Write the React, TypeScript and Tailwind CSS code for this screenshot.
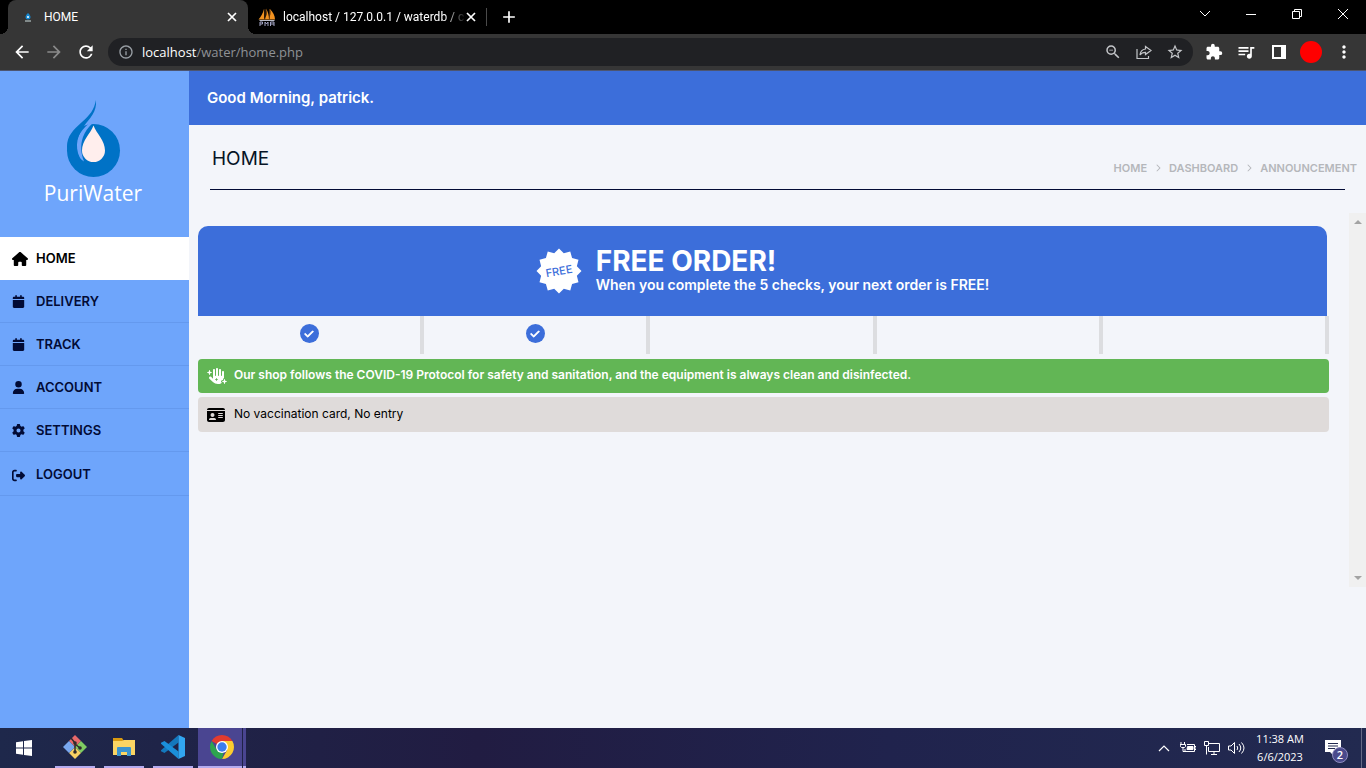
import type { ReactNode } from 'react';
import {
  FaCalendar,
  FaCheck,
  FaChevronRight,
  FaGear,
  FaHandSparkles,
  FaHouse,
  FaIdCard,
  FaRightFromBracket,
  FaUser,
} from 'react-icons/fa6';
import {
  MdAdd,
  MdArrowBack,
  MdArrowForward,
  MdExtension,
  MdInfoOutline,
  MdMoreVert,
  MdOutlineZoomOut,
  MdQueueMusic,
  MdRefresh,
  MdStarBorder,
} from 'react-icons/md';

const navItems = [
  { label: 'HOME', icon: FaHouse, active: true },
  { label: 'DELIVERY', icon: FaCalendar },
  { label: 'TRACK', icon: FaCalendar },
  { label: 'ACCOUNT', icon: FaUser },
  { label: 'SETTINGS', icon: FaGear },
  { label: 'LOGOUT', icon: FaRightFromBracket },
];

const checks = [true, true, false, false, false];

const sealPoints = Array.from({ length: 24 }, (_, i) => {
  const r = i % 2 === 0 ? 22.5 : 18.5;
  const a = (i * Math.PI) / 12;
  return `${(23 + r * Math.sin(a)).toFixed(2)},${(23 - r * Math.cos(a)).toFixed(2)}`;
}).join(' ');

function CloseGlyph() {
  return (
    <svg viewBox="0 0 10 10" className="size-[10px]" stroke="currentColor" strokeWidth="1.7">
      <path d="M1 1l8 8M9 1l-8 8" />
    </svg>
  );
}

function PmaIcon() {
  return (
    <svg viewBox="0 0 18 18" className="size-[18px] shrink-0">
      <path d="M6 1C5 5 3 9 .5 11.500H6zM8 .5c1 4 1 8-2 11h5c0-4-1-8-3-11zM12 1c3 3 5 7 5 10.500h-6c1-3 2-7 1-10.500z" fill="#f29220" />
      <path d="M7 1v10M11.500 1v10" stroke="#6b3a0c" strokeWidth="0.8" />
      <path d="M1 12h16l-1 1H2z" fill="#b9bcc8" />
      <path d="M2 18v-4h2.500v2H2M7 18v-4l1.500 2 1.500-2v4M12.500 18v-4H16v4M12.500 16H16" stroke="#a3a5c4" fill="none" />
    </svg>
  );
}

function BrowserTabs() {
  return (
    <div className="flex h-[34px] bg-black pl-2 text-white">
      <div className="relative flex w-60 items-center rounded-t-lg bg-[#363636] pr-[11px] pl-4">
        <span className="absolute bottom-0 -left-2 size-2 bg-[radial-gradient(circle_at_0_0,#000_8px,#363636_8px)]" />
        <span className="absolute -right-2 bottom-0 size-2 bg-[radial-gradient(circle_at_100%_0,#000_8px,#363636_8px)]" />
        <svg viewBox="0 0 8 10" className="h-[10px] w-2">
          <path d="M4 1c2 2 2.500 3 2.500 4a2.500 2.500 0 0 1-5 0C1.500 4 2 3 4 1z" fill="#1687cf" />
          <circle cx="4" cy="5" r="1" fill="#fff" />
          <path d="M1 9h6" stroke="#cdd" strokeWidth="1" />
        </svg>
        <span className="ml-3 flex-1 text-xs font-['Roboto',sans-serif]">HOME</span>
        <button aria-label="Close tab"><CloseGlyph /></button>
      </div>
      <div className="my-2 flex w-[239px] items-center border-r border-[#4a4a4a] pr-[10px] pl-[10px]">
        <PmaIcon />
        <span className="ml-[7px] flex-1 text-xs whitespace-nowrap font-['Roboto',sans-serif] [mask-image:linear-gradient(90deg,#000_88%,transparent)]">
          localhost / 127.0.0.1 / waterdb / c
        </span>
        <button aria-label="Close tab"><CloseGlyph /></button>
      </div>
      <button aria-label="New tab" className="ml-3"><MdAdd className="size-5" /></button>
      <div className="ml-auto flex items-center pb-[6px]">
        <button aria-label="Search tabs" className="flex w-[46px] justify-center">
          <svg viewBox="0 0 12 8" className="h-2 w-3" fill="none" stroke="currentColor"><path d="M1 1l5 5 5-5" /></svg>
        </button>
        <button aria-label="Minimize" className="flex w-[46px] justify-center">
          <svg viewBox="0 0 10 10" className="size-[10px]" stroke="currentColor"><path d="M0 5.500h10" /></svg>
        </button>
        <button aria-label="Restore" className="flex w-[46px] justify-center">
          <svg viewBox="0 0 10 10" className="size-[10px]" fill="none" stroke="currentColor"><path d="M.5 2.500h7v7h-7zM2.500 2V.5h7v7H8" /></svg>
        </button>
        <button aria-label="Close" className="flex w-[46px] justify-center">
          <svg viewBox="0 0 10 10" className="size-[10px]" stroke="currentColor"><path d="M0 0l10 10M10 0L0 10" /></svg>
        </button>
      </div>
    </div>
  );
}

function BrowserToolbar() {
  return (
    <div className="flex h-[37px] items-center border-b border-[#4d5570] bg-[#363636] pr-3 pl-3 text-white">
      <button aria-label="Back"><MdArrowBack className="size-5" /></button>
      <button aria-label="Forward" className="ml-3 text-[#8a8a8a]"><MdArrowForward className="size-5" /></button>
      <button aria-label="Reload" className="ml-3"><MdRefresh className="size-5" /></button>
      <div className="ml-3 flex h-7 flex-1 items-center rounded-full bg-[#202124] pr-[9px] pl-[10px] text-[#c4c6c9]">
        <MdInfoOutline className="size-4 text-[#9aa0a6]" />
        <div className="ml-2 flex-1 pt-px text-[13px] text-[#8f9296]"><span className="text-white">localhost</span>/water/home.php</div>
        <div className="flex items-center gap-[14px]">
          <button aria-label="Zoom"><MdOutlineZoomOut className="size-[18px]" /></button>
          <button aria-label="Share">
            <svg viewBox="0 0 16 16" className="size-4" fill="none" stroke="currentColor" strokeWidth="1.200">
              <path d="M1 5v9.500h11.500V12" />
              <path d="M9.500 2.500L15 6.500l-5.500 4V8.300C7 8.300 5.300 9 4 11c.3-3.500 2.300-5.600 5.500-6z" />
            </svg>
          </button>
          <button aria-label="Bookmark"><MdStarBorder className="size-[18px]" /></button>
        </div>
      </div>
      <div className="ml-3 flex items-center">
        <button aria-label="Extensions"><MdExtension className="size-[18px]" /></button>
        <button aria-label="Media" className="ml-[13px]"><MdQueueMusic className="size-5" /></button>
        <button aria-label="Side panel" className="ml-4">
          <svg viewBox="0 0 14 14" className="size-[14px]"><path d="M0 0h14v14H0zM2 2v10h7V2z" fill="currentColor" fillRule="evenodd" /></svg>
        </button>
        <button aria-label="Profile" className="ml-[14px] size-[22px] rounded-full bg-[#ff0000]" />
        <button aria-label="Menu" className="ml-3"><MdMoreVert className="size-5" /></button>
      </div>
    </div>
  );
}

function Logo() {
  return (
    <div className="flex h-[166px] flex-col items-center pt-7 pr-[3px]">
      <svg viewBox="0 0 60 80" className="h-20 w-[60px]">
        <circle cx="30.500" cy="51.500" r="26.500" fill="#0072c6" />
        <path d="M25.500 24.800C16 33 11 43 14 54c2 4 4 7 7 8.500-3-8-4-16-1-24.500 2-5 5-9.500 9-13.200z" fill="#6ea5fb" />
        <path d="M33 1c1 12-6 18-12 26-9 13-9 24-2 36C9 60 4 55 4 48c0-11 6-17 15-25C27 16 31 11 33 1z" fill="#0072c6" />
        <path d="M30.500 26.500c3 8 11.500 15 11.500 25a11.500 11.500 0 0 1-23 0c0-10 8.500-17 11.500-25z" fill="#ffeeed" />
      </svg>
      <span className="-mt-0.5 text-[21px] leading-8 font-medium text-white font-['Open_Sans',sans-serif]">PuriWater</span>
    </div>
  );
}

function Sidebar() {
  return (
    <aside className="w-[189px] shrink-0 bg-[#6ea5fb] font-['Inter',sans-serif] text-[#020b35]">
      <Logo />
      <nav>
        {navItems.map(({ label, icon: Icon, active }) => (
          <a
            key={label}
            href="#"
            className={
              active
                ? 'flex h-[43px] items-center bg-white px-3 text-[13px] font-semibold text-black'
                : 'flex h-[43px] items-center border-b border-[#6499ee] px-3 pt-px text-[13px] font-semibold last:h-11 last:pt-[3px]'
            }
          >
            <span className="w-6"><Icon className={active ? 'size-4' : 'size-[13px]'} /></span>
            {label}
          </a>
        ))}
      </nav>
    </aside>
  );
}

function Notice({ icon, className, children }: { icon: ReactNode; className: string; children: ReactNode }) {
  return (
    <p className={`flex items-center rounded px-[9px] ${className}`}>
      <span className="w-[27px]">{icon}</span>
      <span className="pb-0.5">{children}</span>
    </p>
  );
}

function Content() {
  return (
    <main className="flex min-w-0 flex-1 flex-col bg-[#f3f5fa] font-['Inter',sans-serif] text-black">
      <header className="flex h-[54px] items-center bg-[#3c6eda] px-[18px] text-[15px] font-semibold text-white">
        Good Morning, patrick.
      </header>
      <div className="mx-[21px] flex h-[65px] items-center justify-between border-b border-[#020b35]">
        <h1 className="pt-1 pl-0.5 text-[19px] leading-6 text-[#061426]">HOME</h1>
        <nav aria-label="Breadcrumb" className="-mr-3 flex items-center gap-[7px] pt-[22px] text-[11px] font-semibold text-[#b5b7bb]">
          <a href="#">HOME</a>
          <FaChevronRight className="size-2" />
          <a href="#">DASHBOARD</a>
          <FaChevronRight className="size-2" />
          <a href="#">ANNOUNCEMENT</a>
        </nav>
      </div>
      <div className="mt-[23px] flex min-h-[374px]">
        <div className="min-w-0 flex-1 pt-[13px] pr-5 pl-[9px]">
          <section className="mr-0.5 flex h-[90px] items-center justify-center gap-[14px] rounded-t-[10px] bg-[#3c6eda] text-white">
            <svg viewBox="0 0 46 46" className="size-[46px]">
              <polygon points={sealPoints} fill="#fff" />
              <text x="23" y="27" textAnchor="middle" fontSize="11" fontWeight="500" fill="#3c6eda" transform="rotate(-10 23 23)">FREE</text>
            </svg>
            <div>
              <h2 className="text-[28px] leading-7 font-bold">FREE ORDER!</h2>
              <p className="text-sm leading-5 font-semibold">When you complete the 5 checks, your next order is FREE!</p>
            </div>
          </section>
          <ol className="grid h-[38px] grid-cols-5">
            {checks.map((done, i) => (
              <li key={i} className="flex justify-center border-r-4 border-[#dcdde0] pt-2">
                {done && (
                  <span className="flex size-[19px] items-center justify-center rounded-full bg-[#3c6eda] text-white">
                    <FaCheck className="size-[10px]" stroke="currentColor" strokeWidth="40" />
                  </span>
                )}
              </li>
            ))}
          </ol>
          <Notice icon={<FaHandSparkles className="size-5" />} className="mt-[5px] h-[34px] bg-[#62b655] text-xs font-semibold text-white">
            Our shop follows the COVID-19 Protocol for safety and sanitation, and the equipment is always clean and disinfected.
          </Notice>
          <Notice icon={<FaIdCard className="size-[18px]" />} className="mt-1 h-[35px] bg-[#dfdbda] text-xs text-black">
            No vaccination card, No entry
          </Notice>
        </div>
        <div className="flex w-[17px] flex-col items-center justify-between bg-[#f0f0f0] py-[7px] text-[#a3a3a3]">
          <svg viewBox="0 0 8 4" className="h-1 w-2"><path d="M0 4l4-4 4 4z" fill="currentColor" /></svg>
          <svg viewBox="0 0 8 4" className="h-1 w-2"><path d="M0 0l4 4 4-4z" fill="currentColor" /></svg>
        </div>
      </div>
    </main>
  );
}

function GitIcon() {
  return (
    <svg viewBox="0 0 24 24" className="size-6">
      <path d="M12 0l6 6-6 6-6-6z" fill="#e8696b" />
      <path d="M18 6l6 6-6 6-6-6z" fill="#7fcb62" />
      <path d="M12 12l6 6-6 6-6-6z" fill="#f7d063" />
      <path d="M6 6l6 6-6 6-6-6z" fill="#79a7ef" />
      <path d="M8 3l4 5v10M12 9l5 4" stroke="#302b2b" strokeWidth="1.500" fill="none" />
      <circle cx="12" cy="8" r="1.800" fill="#302b2b" />
      <circle cx="12" cy="17" r="1.800" fill="#302b2b" />
      <circle cx="17" cy="13" r="1.800" fill="#302b2b" />
    </svg>
  );
}

function FolderIcon() {
  return (
    <svg viewBox="0 0 22 20" className="h-5 w-[22px]">
      <path d="M0 1h9l2 3H0z" fill="#d99a10" />
      <path d="M0 4h9l2-1h11v15H0z" fill="#fbd563" />
      <path d="M4 19v-8q0-1 1-1h12q1 0 1 1v8h-4v-4H8v4z" fill="#3b94cf" />
    </svg>
  );
}

function CodeIcon() {
  return (
    <svg viewBox="0 0 24 24" className="size-6">
      <path d="M17.500 0v7.500L3.500 18 0 16.200v-1z" fill="#1478bd" />
      <path d="M0 8.800v-1L3.500 6l14 10.500V24z" fill="#1b8fda" />
      <path d="M17.500 0L24 3v18l-6.500 3z" fill="#32a6f1" />
    </svg>
  );
}

function ChromeIcon() {
  return (
    <svg viewBox="0 0 24 24" className="size-6">
      <path d="M12 12L1.610 6A12 12 0 0 1 22.390 6z" fill="#e33b2e" />
      <path d="M12 6h10.390A12 12 0 0 1 12 24l5.200-9z" fill="#fccc2f" />
      <path d="M1.610 6l5.200 9 5.190 3 1.500-.3L12 24A12 12 0 0 1 1.610 6z" fill="#2da44f" />
      <circle cx="12" cy="12" r="6" fill="#fff" />
      <circle cx="12" cy="12" r="4.700" fill="#3b7ded" />
    </svg>
  );
}

function Taskbar() {
  return (
    <footer className="flex h-10 items-stretch bg-[linear-gradient(90deg,#1e284b,#211c42_35%,#20234d_65%,#222a50)] text-white">
      <button aria-label="Start" className="flex w-12 items-center justify-center">
        <svg viewBox="0 0 16 16" className="size-4" fill="currentColor"><path d="M0 2.300l7-1v6.300H0zM8 1.100L16 0v7.600H8zM0 8.500h7v6.300l-7-1zM8 8.500h8V16l-8-1.100z" /></svg>
      </button>
      <div className="ml-[7px] flex gap-[9px]">
        <button aria-label="Git" className="flex w-10 items-center justify-center border-b-2 border-[#b4abef]"><GitIcon /></button>
        <button aria-label="File Explorer" className="flex w-10 items-center justify-center border-b-2 border-[#b4abef]"><FolderIcon /></button>
        <button aria-label="Visual Studio Code" className="flex w-10 items-center justify-center border-b-2 border-[#b4abef]"><CodeIcon /></button>
      </div>
      <button aria-label="Chrome" className="ml-[5px] flex w-11 items-center justify-center border-b-2 border-[#b4abef] bg-[#4a4591] pl-1"><ChromeIcon /></button>
      <span className="ml-px w-[3px] border-b-2 border-[#b4abef] bg-[#4a4591]" />
      <div className="ml-auto flex items-center">
        <svg viewBox="0 0 12 8" className="h-2 w-3" fill="none" stroke="currentColor" strokeWidth="1.200"><path d="M1 7l5-5 5 5" /></svg>
        <svg viewBox="0 0 16 12" className="ml-[10px] h-3 w-4" fill="none" stroke="currentColor">
          <path d="M1 0v2M4.500 0v2M0 2.500h5.500v2l-1 1h-3l-1-1zM3 6v3.500h2M7 2.500h7.500v7H5V7M14.500 4.500H16v3h-1.500" />
          <path d="M7.500 4.500H13v3H7z" fill="currentColor" />
        </svg>
        <svg viewBox="0 0 16 14" className="ml-2 h-[14px] w-4" fill="none" stroke="currentColor">
          <path d="M5 2.500h10.500v8H4.500V6M7 13.500h6M10 10.500v3M.5.5h4v4h-4zM2.500 5v8.500" />
        </svg>
        <svg viewBox="0 0 17 14" className="ml-2 h-[14px] w-[17px]" fill="none" stroke="currentColor">
          <path d="M.5 5h2.500l3.500-3.500v11L3 9H.5zM9 5q1.500 2 0 4M11 3q3.500 4 0 8M13.500 1.500q5 5.500 0 11" />
        </svg>
        <div className="ml-[10px] w-[50px] text-center text-[11px] leading-[18px] whitespace-nowrap">
          <div>11:38 AM</div>
          <div>6/6/2023</div>
        </div>
        <div className="relative ml-5 w-6">
          <svg viewBox="0 0 16 16" className="size-4"><path d="M0 0h16v12H8v3l-3-3H0z" fill="#fff" /><path d="M3 3.500h10M3 6h10M3 8.500h7" stroke="#222a50" /></svg>
          <span className="absolute top-[7px] left-[7px] flex size-4 items-center justify-center rounded-full border border-[#8f8dc0] bg-[#4a4a8c] text-[11px] font-semibold">2</span>
        </div>
        <span className="ml-3 h-10 w-[5px] border-l border-[#656a86]" />
      </div>
    </footer>
  );
}

export default function App() {
  return (
    <div className="flex min-h-screen flex-col font-['Open_Sans',sans-serif]">
      <BrowserTabs />
      <BrowserToolbar />
      <div className="flex flex-1">
        <Sidebar />
        <Content />
      </div>
      <Taskbar />
    </div>
  );
}
